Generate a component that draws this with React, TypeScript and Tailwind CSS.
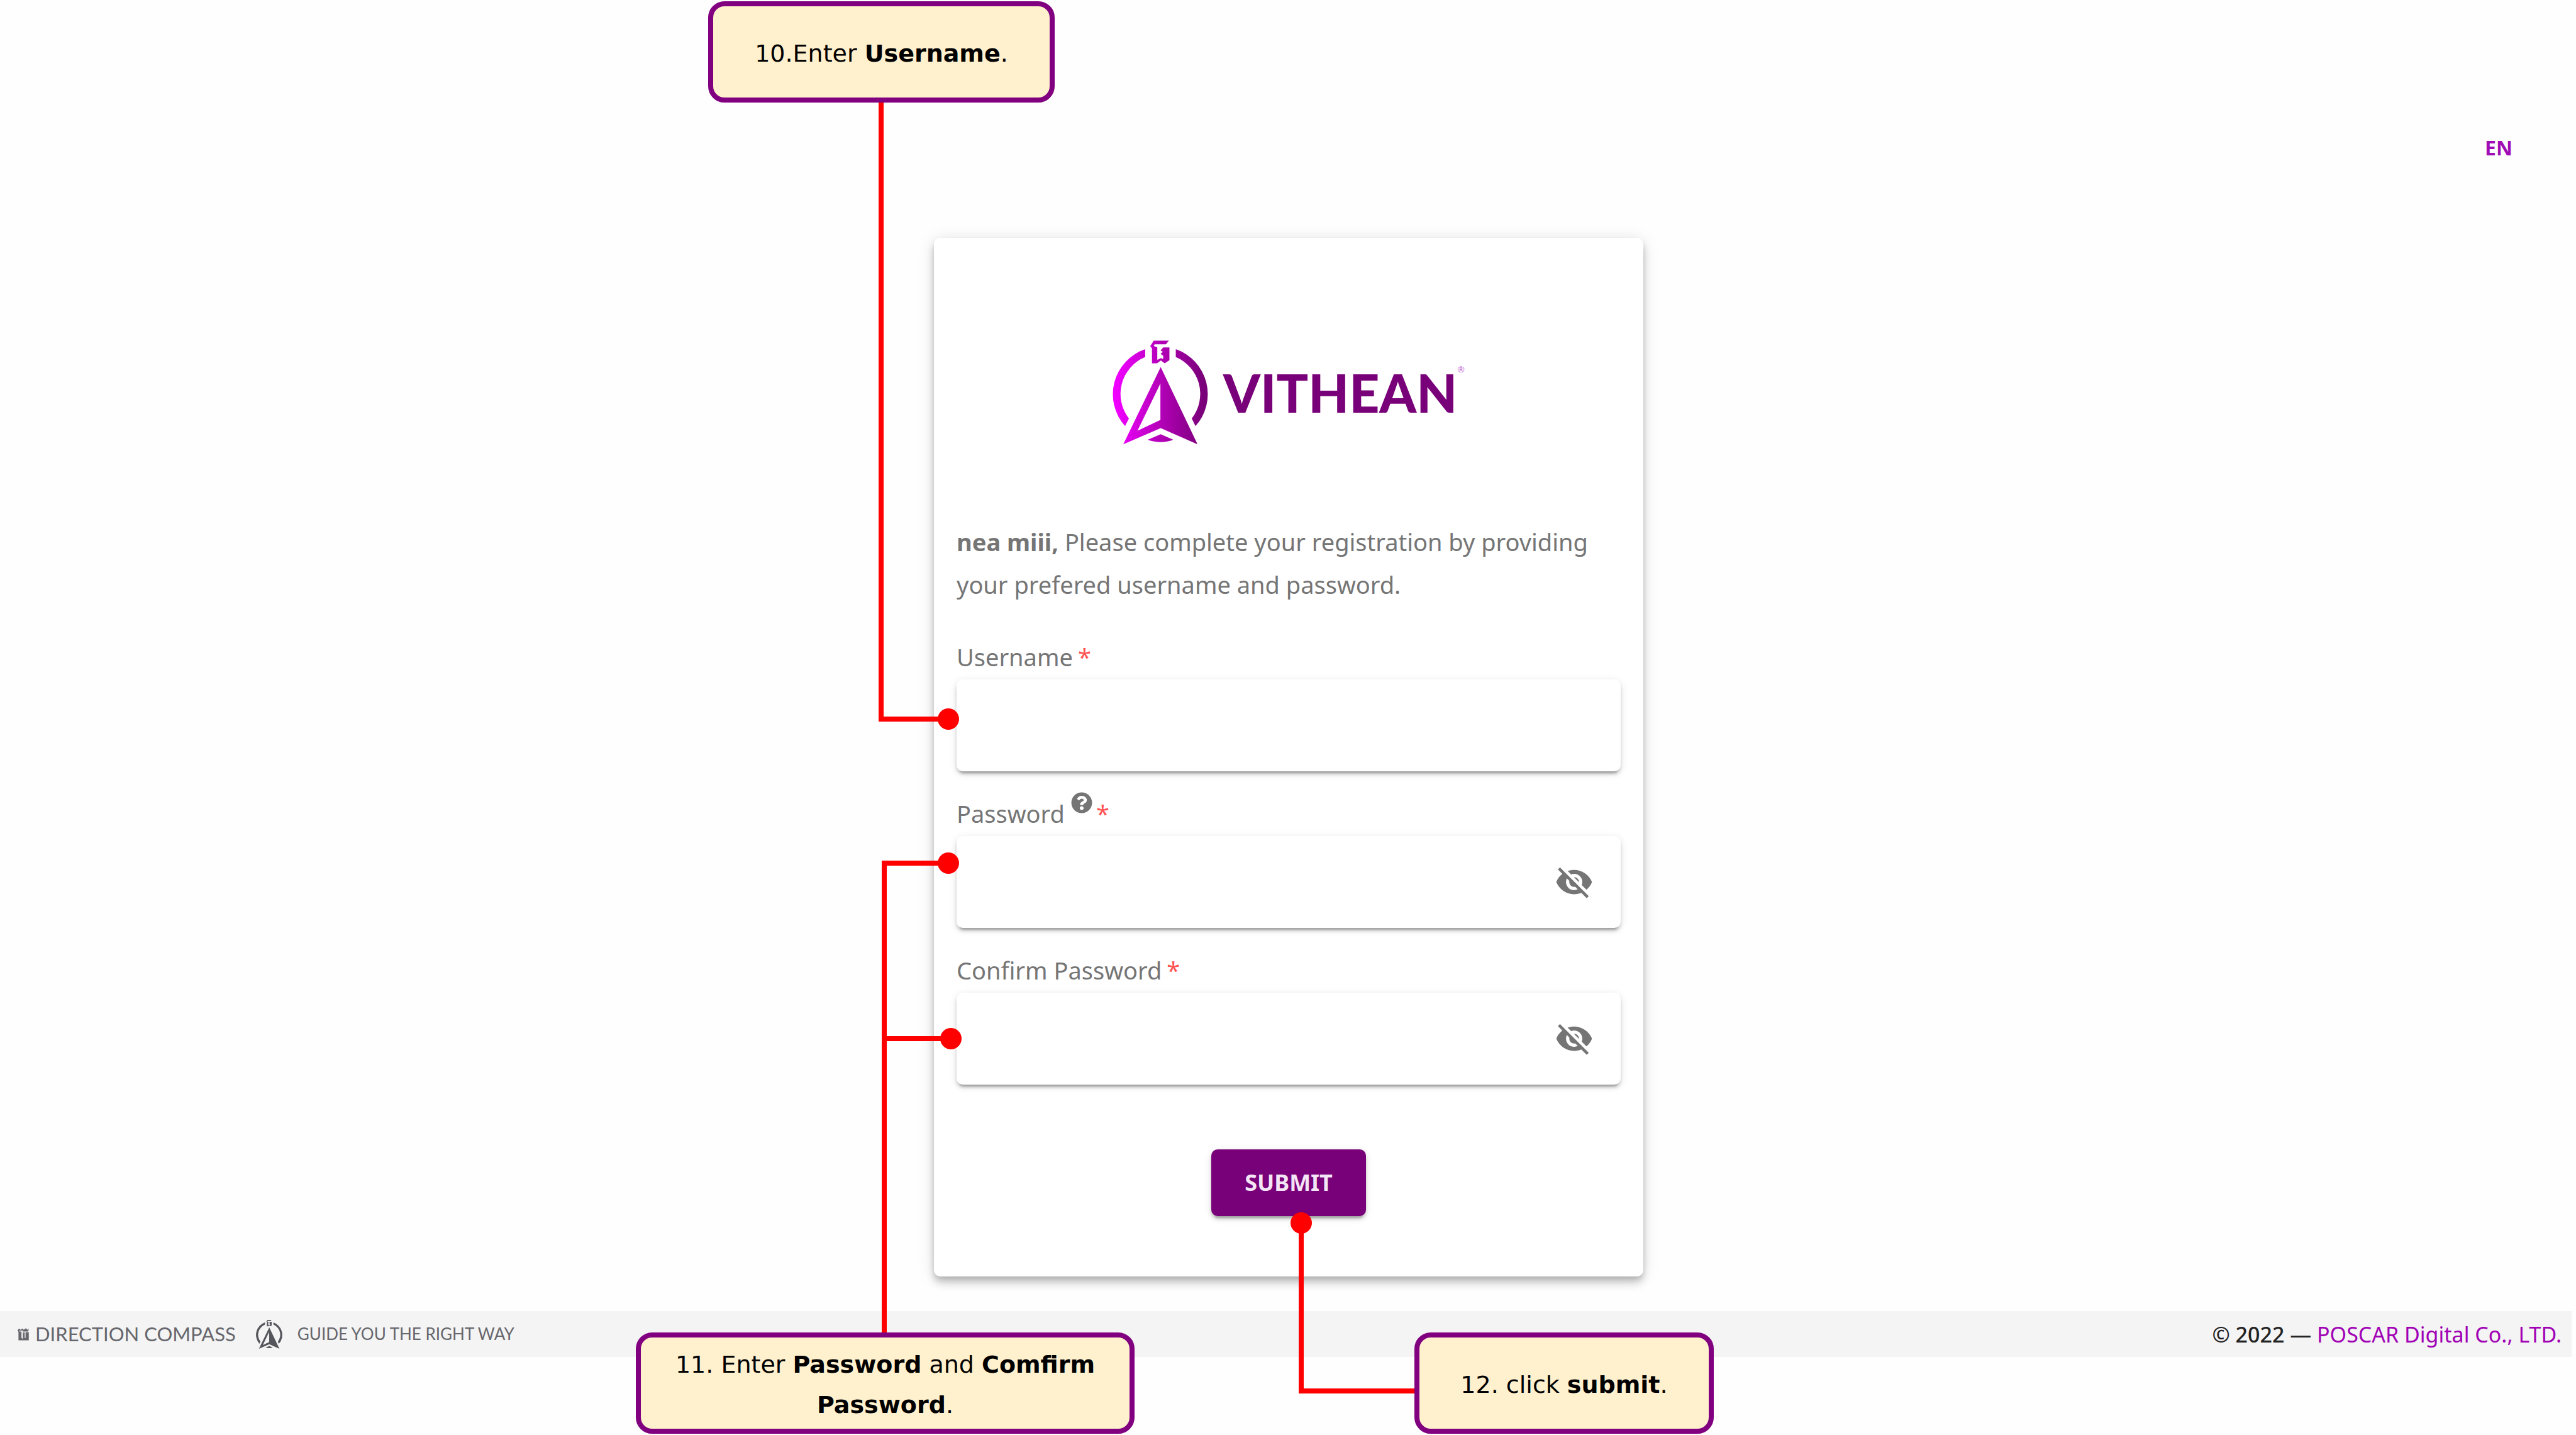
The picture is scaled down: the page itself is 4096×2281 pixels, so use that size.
import type { ReactNode } from "react";
import { FaQuestionCircle } from "react-icons/fa";

const EYE_OFF =
  "M11.83,9L15,12.16C15,12.11 15,12.05 15,12A3,3 0 0,0 12,9C11.94,9 11.89,9 11.83,9M7.53,9.8L9.08,11.35C9.03,11.56 9,11.77 9,12A3,3 0 0,0 12,15C12.22,15 12.44,14.97 12.65,14.92L14.2,16.45C13.53,16.78 12.79,17 12,17A5,5 0 0,1 7,12C7,11.21 7.2,10.47 7.53,9.8M2,4.27L4.28,6.55L4.73,7C3.08,8.3 1.78,10 1,12C2.73,16.39 7,19.5 12,19.5C13.55,19.5 15.03,19.2 16.38,18.66L16.81,19.08L19.73,22L21,20.73L3.27,3M12,7A5,5 0 0,1 17,12C17,12.64 16.87,13.26 16.64,13.82L19.57,16.75C21.07,15.5 22.27,13.86 23,12C21.27,7.61 17,4.5 12,4.5C10.6,4.5 9.26,4.75 8,5.2L10.17,7.35C10.74,7.13 11.35,7 12,7Z";

function Compass({ className, fill }: { className: string; fill: string }) {
  return (
    <svg viewBox="50 40 645 710" className={className} fill={fill} aria-hidden="true">
      <defs>
        <linearGradient id="brand" gradientUnits="userSpaceOnUse" x1="75" y1="0" x2="670" y2="0">
          <stop offset="0" stopColor="#f000ff" />
          <stop offset="0.5" stopColor="#b400b8" />
          <stop offset="1" stopColor="#780078" />
        </linearGradient>
      </defs>
      <path d="M270 104 A322 322 0 0 0 134 624 L160 572 A270 270 0 0 1 270 157 Z" />
      <path d="M477 104 A322 322 0 0 1 610 624 L585 572 A270 270 0 0 0 477 157 Z" />
      <path
        fillRule="evenodd"
        d="M375 225 L624 747 L375 637 L122 747 Z M373 335 L218 655 L373 582 Z"
      />
      <path d="M375 679 L460 716 Q375 748 287 716 Z" />
      <path d="M328 46 H430 L410 71 H334 L328 82 L352 92 V176 L376 164 L392 170 V148 L374 136 L390 122 L374 112 L392 92 H434 V178 L402 199 L376 180 L350 199 H316 V98 L304 84 Z" />
    </svg>
  );
}

function Emblem() {
  return (
    <svg viewBox="0 0 77 83" className="h-5 w-[18px]" fill="#66666c" aria-hidden="true">
      <path d="M0 14 L10 2 L20 10 L32 2 L42 10 L56 0 L66 10 L76 2 L72 22 H36 V16 H14 L10 22 H26 V66 L36 72 V28 H48 V66 H54 V26 H76 V82 H6 V26 Z" />
    </svg>
  );
}

function Field({
  id,
  label,
  help,
  secret,
}: {
  id: string;
  label: string;
  help?: boolean;
  secret?: boolean;
}) {
  return (
    <div className="flex flex-col gap-3">
      <label htmlFor={id} className="flex items-baseline gap-2 text-[38px] leading-[48px]">
        {label}
        {help && (
          <FaQuestionCircle
            className="-mt-2.5 -mr-0.5 ml-0.5 size-[34px] self-start text-[#757575]"
            aria-hidden="true"
          />
        )}
        <span className="text-[#ff5252]">*</span>
      </label>
      <div className="flex h-[146px] items-center rounded-[10px] bg-white pr-[43px] shadow-[0_8px_3px_-5px_rgba(0,0,0,0.2),0_5px_5px_0_rgba(0,0,0,0.14),0_3px_13px_0_rgba(0,0,0,0.12)]">
        <input
          id={id}
          type={secret ? "password" : "text"}
          className="h-full min-w-0 flex-1 rounded-[10px] bg-transparent px-8 text-[38px] outline-none"
        />
        {secret && (
          <button type="button" aria-label={`Show ${label}`}>
            <svg viewBox="0 0 24 24" className="size-[62px]" fill="#757575" aria-hidden="true">
              <path d={EYE_OFF} />
            </svg>
          </button>
        )}
      </div>
    </div>
  );
}

function Callout({ className, children }: { className: string; children: ReactNode }) {
  return (
    <div
      className={`absolute flex h-[161px] items-center justify-center rounded-[26px] border-8 border-[#800080] bg-[#fff0ce] pt-1 text-center font-['DejaVu_Sans',sans-serif] text-[38px] leading-[64px] text-black ${className}`}
    >
      <p>{children}</p>
    </div>
  );
}

function Connectors() {
  return (
    <svg
      className="pointer-events-none absolute top-0 left-0 h-[2281px] w-[4096px]"
      viewBox="0 0 4096 2281"
      aria-hidden="true"
    >
      <g fill="none" stroke="#ff0000" strokeWidth="8">
        <path d="M1401 160 V1143 H1508" />
        <path d="M1406 2122 V1372 H1508" />
        <path d="M1406 1651 H1512" />
        <path d="M2069 1944 V2211 H2252" />
      </g>
      <g fill="#ff0000">
        <circle cx="1508" cy="1143" r="17" />
        <circle cx="1508" cy="1372" r="17" />
        <circle cx="1512" cy="1651" r="17" />
        <circle cx="2069" cy="1944" r="17" />
      </g>
    </svg>
  );
}

export default function App() {
  return (
    <div className="relative min-h-screen overflow-hidden bg-[#fefefe] font-['Noto_Sans',sans-serif] text-[#757575]">
      <header className="flex h-[378px] justify-end pt-[211px] pr-[101px]">
        <button type="button" className="h-12 text-[32px] leading-[48px] font-bold text-[#a00db5]">
          EN
        </button>
      </header>

      <main className="flex justify-center pl-0.5">
        <form className="flex w-[1128px] max-w-full flex-col rounded-[10px] bg-white px-9 pt-[162px] pb-24 shadow-[0_5px_11px_-3px_rgba(0,0,0,0.2),0_11px_13px_0_rgba(0,0,0,0.14),0_3px_26px_0_rgba(0,0,0,0.12)]">
          <div className="flex items-center justify-center gap-6">
            <Compass className="h-[167px] w-[152px]" fill="url(#brand)" />
            <div className="flex items-start font-['Lato',sans-serif] text-[#780078]">
              <span className="text-[84px] leading-[94px] font-black">VITHEAN</span>
              <span className="text-[14px] leading-5 text-[#c060d0]">®</span>
            </div>
          </div>

          <p className="mt-[120px] text-[38px] leading-[68px]">
            <strong className="font-bold">nea miii,</strong> Please complete your registration by
            providing your prefered username and password.
          </p>

          <div className="mt-[57px] flex flex-col gap-[43px]">
            <Field id="username" label="Username" />
            <Field id="password" label="Password" help secret />
            <Field id="confirm" label="Confirm Password" secret />
          </div>

          <button
            type="button"
            className="mt-[103px] h-[106px] w-[246px] self-center rounded-[10px] bg-[#780078] text-[36px] font-bold text-[#f3e5f5] shadow-[0_8px_3px_-5px_rgba(0,0,0,0.2),0_5px_5px_0_rgba(0,0,0,0.14),0_3px_13px_0_rgba(0,0,0,0.12)]"
          >
            SUBMIT
          </button>
        </form>
      </main>

      <footer className="mt-[55px] mr-[7px] flex h-[73px] items-center justify-between bg-[#f4f4f4] pr-4 pl-7">
        <div className="flex items-center font-['Lato',sans-serif] text-[#66666c]">
          <Emblem />
          <span className="ml-2.5 text-[31px]">DIRECTION COMPASS</span>
          <Compass className="mr-6 ml-8 h-12 w-[42px]" fill="#55555c" />
          <span className="text-[26px]">GUIDE YOU THE RIGHT WAY</span>
        </div>
        <div className="text-[34px] leading-[48px] text-[#222222]">
          <span className="font-medium">© 2022</span> —{" "}
          <a href="#" className="text-[#a000b4]">
            POSCAR Digital Co., LTD.
          </a>
        </div>
      </footer>

      <Connectors />
      <Callout className="top-0.5 left-[1126px] w-[551px]">
        10.Enter <b>Username</b>.
      </Callout>
      <Callout className="top-[2118px] left-[1011px] w-[793px]">
        11. Enter <b>Password</b> and <b>Comfirm Password</b>.
      </Callout>
      <Callout className="top-[2118px] left-[2249px] w-[476px]">
        12. click <b>submit</b>.
      </Callout>
    </div>
  );
}
